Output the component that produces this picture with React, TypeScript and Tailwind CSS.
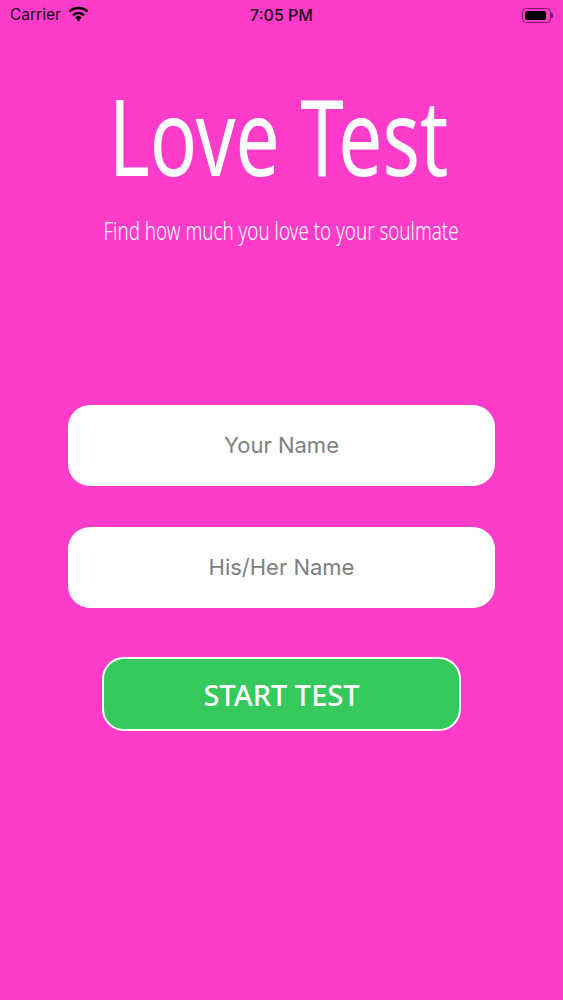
import React from "react";

export default function App() {
  return (
    <div className="h-[1000px] w-[563px] overflow-hidden bg-[#ff3bc9] flex flex-col items-center">
      <div className="w-full h-[30px] flex items-center justify-between px-[10px] text-[#1c0a18] font-['Inter',sans-serif]">
        <div className="flex items-center gap-[7px] w-[120px] text-[15.5px]">
          <span>Carrier</span>
          <svg width="21" height="16" viewBox="0 0 21 16" fill="none" stroke="#000" strokeWidth="2.6" className="-mt-[2px]">
            <path d="M1.5 5.6 A13 13 0 0 1 19.5 5.6" />
            <path d="M5 9.2 A8 8 0 0 1 16 9.2" />
            <path d="M8.2 12.4 A3.6 3.6 0 0 1 12.8 12.4" />
            <circle cx="10.5" cy="14" r="1.3" fill="#000" stroke="none" />
          </svg>
        </div>
        <span className="text-[16px] font-medium">7:05 PM</span>
        <div className="w-[120px] flex justify-end items-center">
          <div className="w-[29px] h-[15px] border border-[#7a1a60] rounded-[4px] p-[2px]">
            <div className="h-full w-[21px] bg-black rounded-[2px]" />
          </div>
          <div className="w-[2px] h-[5px] bg-[#7a1a60] rounded-r-[1px]" />
        </div>
      </div>
      <h1 className="mt-[50px] text-[106px] leading-[110px] text-white font-normal font-['Noto_Sans',sans-serif] whitespace-nowrap scale-x-[0.74] -translate-x-[3px]">Love Test</h1>
      <p className="mt-[25px] text-[25px] leading-[30px] text-white font-light font-['Noto_Sans',sans-serif] whitespace-nowrap scale-x-[0.752]">Find how much you love to your soulmate</p>
      <div className="mt-[160px] w-[427px] h-[81px] rounded-[22px] bg-white flex items-center justify-center text-[22px] text-[#808080] font-['Inter',sans-serif]">Your Name</div>
      <div className="mt-[41px] w-[427px] h-[81px] rounded-[22px] bg-white flex items-center justify-center text-[22px] text-[#808080] font-['Inter',sans-serif]">His/Her Name</div>
      <button className="mt-[49px] w-[359px] h-[74px] rounded-[22px] bg-[#36c95d] border-[2.5px] border-white text-white text-[29px] leading-[40px] pt-[2px] font-medium font-['Noto_Sans',sans-serif]">START TEST</button>
    </div>
  );
}
